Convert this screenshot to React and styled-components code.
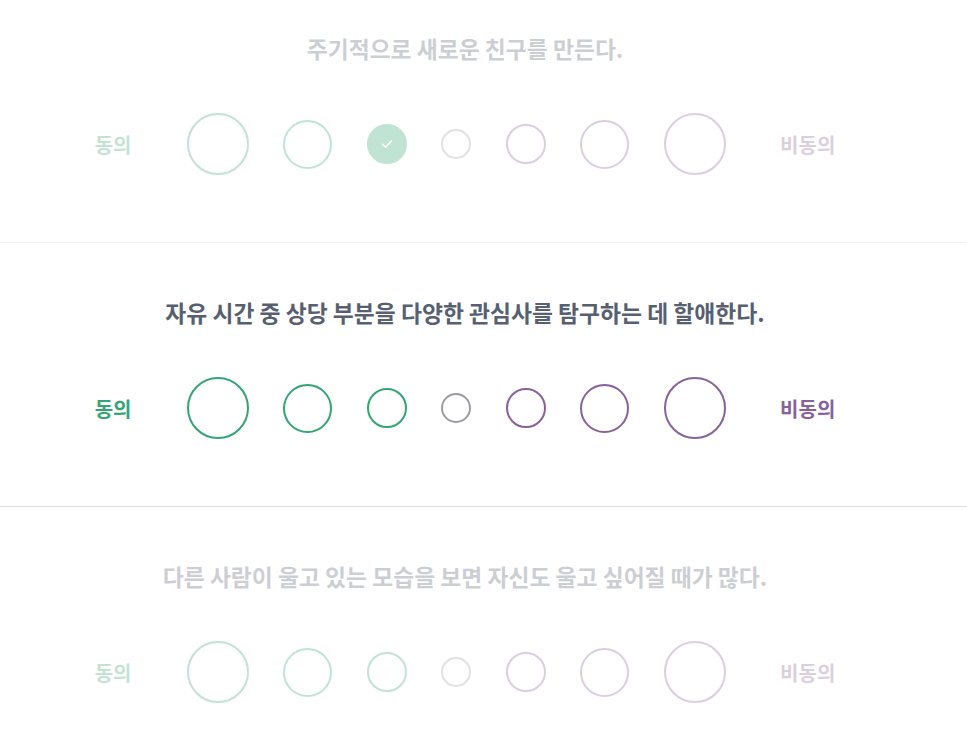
import React, { useState } from 'react';
import styled, { createGlobalStyle } from 'styled-components';

const GlobalStyle = createGlobalStyle`
  html, body {
    margin: 0;
    padding: 0;
    background: #ffffff;
    overflow: hidden;
  }
  body {
    font-family: "Noto Sans CJK KR", "Noto Sans", sans-serif;
  }
`;

const questions = [
  { text: '주기적으로 새로운 친구를 만든다.', active: false, picked: 2 },
  { text: '자유 시간 중 상당 부분을 다양한 관심사를 탐구하는 데 할애한다.', active: true, picked: null },
  { text: '다른 사람이 울고 있는 모습을 보면 자신도 울고 싶어질 때가 많다.', active: false, picked: null },
];

const options = [
  { size: 62, tone: 'agree' },
  { size: 49, tone: 'agree' },
  { size: 40, tone: 'agree' },
  { size: 30, tone: 'neutral' },
  { size: 40, tone: 'disagree' },
  { size: 49, tone: 'disagree' },
  { size: 62, tone: 'disagree' },
];

const colors = {
  agree: '#33a474',
  neutral: '#9b9ba3',
  disagree: '#88619a',
};

const CheckIcon = () => (
  <svg width="14" height="14" viewBox="0 0 14 14" fill="none">
    <path d="M2.5 7.4 L5.6 10.2 L11.5 3.8" stroke="#ffffff" strokeWidth="1.6" strokeLinecap="round" strokeLinejoin="round" />
  </svg>
);

const Question = ({ text, active, picked }) => {
  const [value, setValue] = useState(picked);
  return (
    <QuestionBlock $active={active}>
      <Statement>{text}</Statement>
      <Options>
        <Label $tone="agree">동의</Label>
        <Circles>
          {options.map((o, i) => (
            <Circle
              key={i}
              $size={o.size}
              $color={colors[o.tone]}
              $checked={value === i}
              onClick={() => setValue(i)}
            >
              {value === i && <CheckIcon />}
            </Circle>
          ))}
        </Circles>
        <Label $tone="disagree">비동의</Label>
      </Options>
    </QuestionBlock>
  );
};

const App = () => {
  return (
    <>
      <GlobalStyle />
      <Quiz>
        {questions.map((q, i) => (
          <Question key={i} {...q} />
        ))}
      </Quiz>
    </>
  );
};

const Quiz = styled.div`
  width: 967px;
  margin-top: -21px;
`;

const QuestionBlock = styled.section`
  display: flex;
  flex-direction: column;
  align-items: center;
  padding: 55px 37px 67px 0;
  border-bottom: 1px solid #dcdcdc;
  opacity: ${(p) => (p.$active ? 1 : 0.3)};
`;

const Statement = styled.h2`
  margin: 0;
  font-size: 22.8px;
  line-height: 29px;
  font-weight: 700;
  color: #576071;
  text-align: center;
`;

const Options = styled.div`
  display: flex;
  align-items: center;
  margin-top: 50px;
  height: 62px;
`;

const Label = styled.span`
  font-size: 20px;
  font-weight: 700;
  color: ${(p) => colors[p.$tone]};
  margin: ${(p) => (p.$tone === 'agree' ? '0 55px 0 0' : '0 0 0 54px')};
`;

const Circles = styled.div`
  display: flex;
  align-items: center;
  gap: 34.6px;
`;

const Circle = styled.button`
  width: ${(p) => p.$size}px;
  height: ${(p) => p.$size}px;
  border-radius: 50%;
  border: 2px solid ${(p) => p.$color};
  background: ${(p) => (p.$checked ? p.$color : '#ffffff')};
  padding: 0;
  display: flex;
  align-items: center;
  justify-content: center;
  cursor: pointer;
  box-sizing: border-box;
`;

export default App;
